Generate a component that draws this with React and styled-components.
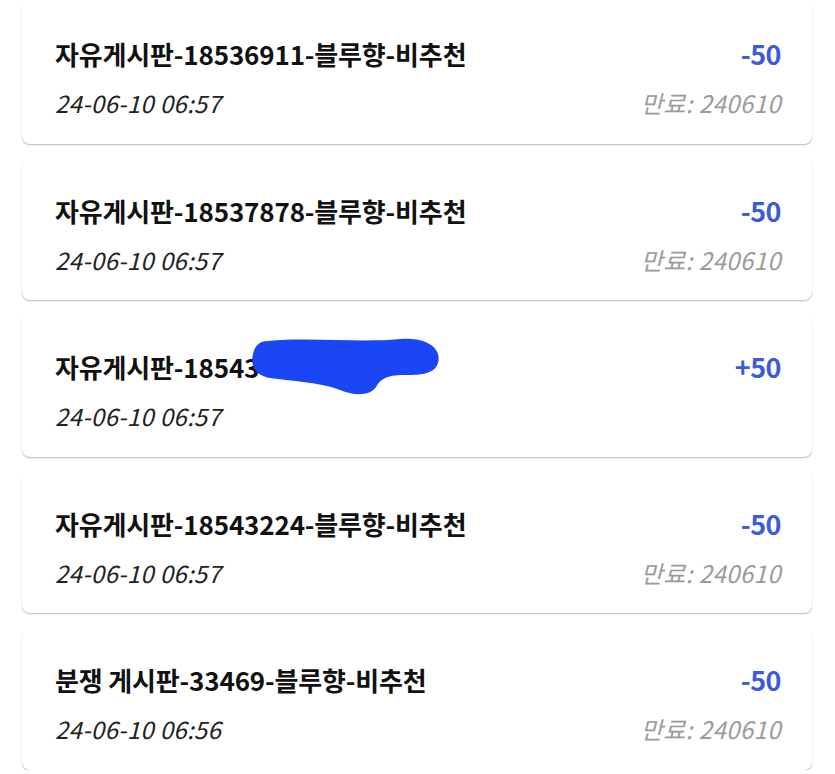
import React from "react";
import styled, { createGlobalStyle } from "styled-components";

const GlobalStyle = createGlobalStyle`
  body {
    margin: 0;
    background: #ffffff;
    font-family: "Noto Sans CJK KR", "Noto Sans", sans-serif;
  }
`;

const ListWrap = styled.div`
  display: flex;
  flex-direction: column;
  gap: 14px;
  padding: 1px 23px 0 22px;
  width: 790px;
`;

const Card = styled.div`
  display: flex;
  justify-content: space-between;
  align-items: flex-start;
  height: 142.5px;
  box-sizing: border-box;
  padding: 36px 31px 0 33px;
  background: #fff;
  border-radius: 8px;
  box-shadow: 0 1.5px 1.5px -0.5px rgba(0, 0, 0, 0.28);
`;

const Column = styled.div`
  display: flex;
  flex-direction: column;
  align-items: ${(props) => (props.$right ? "flex-end" : "flex-start")};
  gap: 16px;
`;

const Title = styled.div`
  font-size: 26px;
  font-weight: 700;
  line-height: 34px;
  color: #111;
  letter-spacing: -0.15px;
  position: relative;
`;

const Points = styled.div`
  font-size: 27px;
  font-weight: 700;
  line-height: 34px;
  color: #3d5bd8;
  letter-spacing: -0.5px;
`;

const DateText = styled.div`
  font-size: 24px;
  font-style: italic;
  line-height: 32px;
  color: #222;
  letter-spacing: 0.3px;
`;

const Expire = styled.div`
  font-size: 24px;
  font-style: italic;
  line-height: 32px;
  color: #9b9b9b;
  letter-spacing: 0.4px;
`;

const Scribble = styled.svg`
  position: absolute;
  left: 195px;
  top: -14px;
`;

const items = [
  { title: "자유게시판-18536911-블루향-비추천", date: "24-06-10 06:57", points: "-50", expire: "만료: 240610" },
  { title: "자유게시판-18537878-블루향-비추천", date: "24-06-10 06:57", points: "-50", expire: "만료: 240610" },
  { title: "자유게시판-18543", date: "24-06-10 06:57", points: "+50", hidden: true },
  { title: "자유게시판-18543224-블루향-비추천", date: "24-06-10 06:57", points: "-50", expire: "만료: 240610" },
  { title: "분쟁 게시판-33469-블루향-비추천", date: "24-06-10 06:56", points: "-50", expire: "만료: 240610" },
];

export default function App() {
  return (
    <>
      <GlobalStyle />
      <ListWrap>
        {items.map((item, i) => (
          <Card key={i}>
            <Column>
              <Title>
                {item.title}
                {item.hidden && (
                  <Scribble width="192" height="62" viewBox="0 0 192 62">
                    <path
                      d="M18 5 C60 1 110 7 150 3 C178 1 192 13 188 27 C184 39 170 39 152 39 C138 39 130 43 126 51 C120 60 104 60 90 54 C70 46 40 45 20 42 C6 40 0 30 3 18 C5 9 10 5 18 5 Z"
                      fill="#1a46f5"
                    />
                  </Scribble>
                )}
              </Title>
              <DateText>{item.date}</DateText>
            </Column>
            <Column $right>
              <Points>{item.points}</Points>
              {item.expire && <Expire>{item.expire}</Expire>}
            </Column>
          </Card>
        ))}
      </ListWrap>
    </>
  );
}
